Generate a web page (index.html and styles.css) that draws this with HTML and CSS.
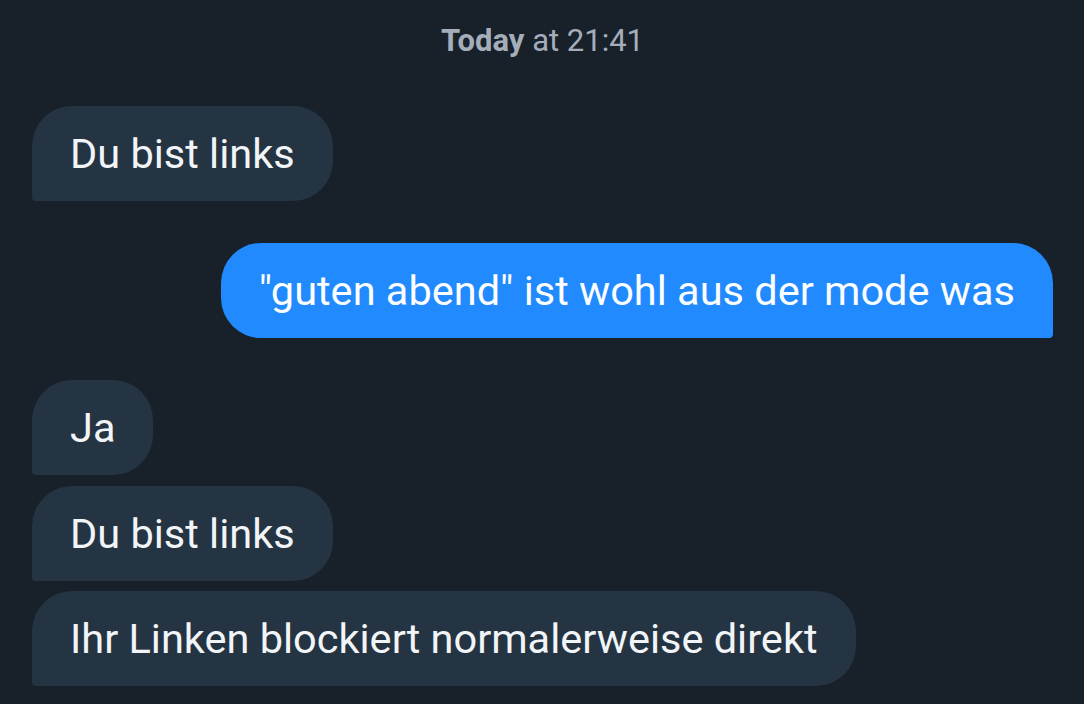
FILE: index.html
```html
<!DOCTYPE html>
<html lang="en">
<head>
  <meta charset="UTF-8">
  <title>Chat</title>
  <meta name="viewport" content="width=device-width, initial-scale=1.0">
  <link rel="stylesheet" href="styles.css">
</head>
<body>
<div class="chat">

  <!-- day separator -->
  <div class="stamp"><b>Today</b> at 21:41</div>

  <div class="group">
    <div class="bubble in">Du bist links</div>
  </div>

  <div class="group out-group">
    <div class="bubble out">"guten abend" ist wohl aus der mode was</div>
  </div>

  <div class="group">
    <div class="bubble in">Ja</div>
    <div class="bubble in">Du bist links</div>
    <div class="bubble in">Ihr Linken blockiert normalerweise direkt</div>
  </div>

</div>
</body>
</html>
```

FILE: styles.css
```css
body { margin: 0; background: #18202a; font-family: Roboto, "Noto Sans", sans-serif; }
.chat { padding: 0 31px 18px 32px; display: flex; flex-direction: column; }
.stamp { text-align: center; color: #a4aebb; font-size: 31px; padding-top: 22px; height: 106px; box-sizing: border-box; }
.stamp b { font-weight: 700; }
.group { display: flex; flex-direction: column; align-items: flex-start; gap: 10.5px; margin-bottom: 42px; }
.group:last-child { margin-bottom: 0; }
.out-group { align-items: flex-end; }
.bubble { font-size: 41.5px; line-height: 95px; height: 95px; padding: 0 38px; color: #f2f5f8; white-space: nowrap; box-sizing: border-box; }
.in { background: #253442; border-radius: 40px 40px 40px 4px; }
.out { background: #208afe; border-radius: 40px 40px 4px 40px; color: #fbfdff; }
```
